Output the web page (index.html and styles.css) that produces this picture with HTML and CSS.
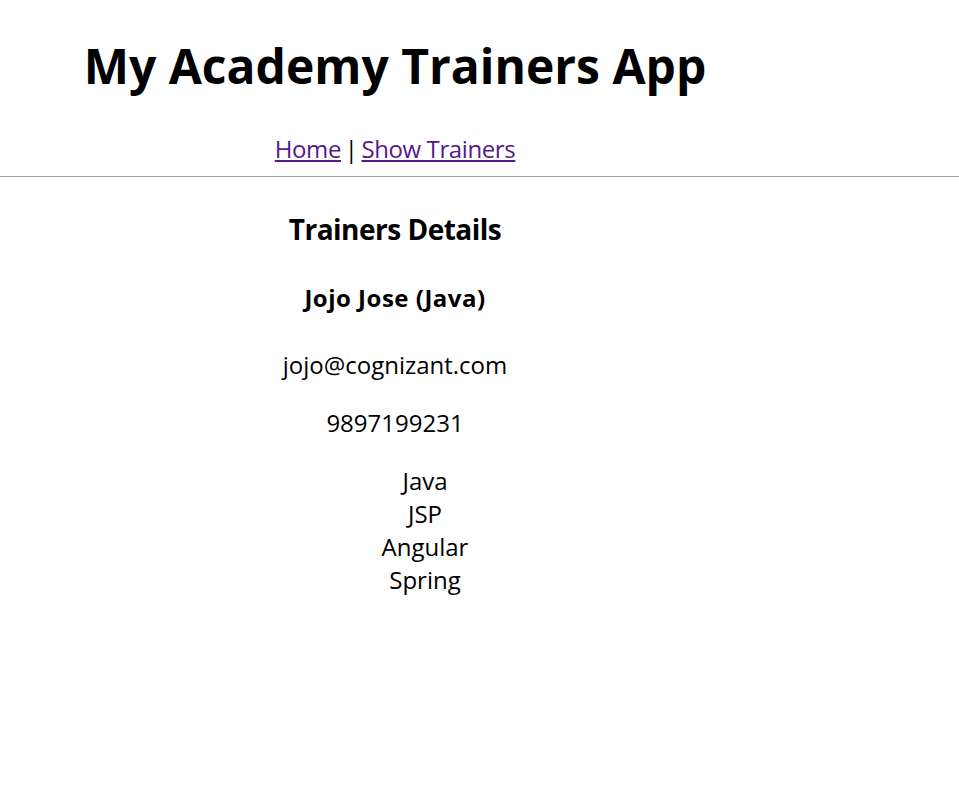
FILE: index.html
```html
<!DOCTYPE html>
<html lang="en">
<head>
<meta charset="utf-8">
<title>My Academy Trainers App</title>
<link rel="stylesheet" href="styles.css">
</head>
<body>
<header class="site-header">
  <div class="column">
    <h1 class="app-title">My Academy Trainers App</h1>
    <nav class="nav"><a href="#">Home</a> | <a href="#">Show Trainers</a></nav>
  </div>
</header>
<main class="column details">
  <h3 class="details-title">Trainers Details</h3>
  <h4 class="trainer-name">Jojo Jose (Java)</h4>
  <p class="info email">jojo@cognizant.com</p>
  <p class="info phone">9897199231</p>
  <ul class="skills">
    <li>Java</li>
    <li>JSP</li>
    <li>Angular</li>
    <li>Spring</li>
  </ul>
</main>
</body>
</html>
```
FILE: styles.css
```css
html, body {
  margin: 0;
  padding: 0;
  background: #fff;
}
body {
  font-family: "Open Sans", "Noto Sans", sans-serif;
  color: #000;
  font-size: 24px;
}
.column {
  width: 766px;
  margin-left: 12px;
  text-align: center;
}
.site-header {
  border-bottom: 1px solid #a0a0a0;
  padding-bottom: 11px;
}
.app-title {
  margin: 34px 0 0;
  font-size: 48px;
  line-height: 64px;
  font-weight: 700;
}
.nav {
  margin-top: 35px;
  line-height: 32px;
  letter-spacing: -0.4px;
  word-spacing: -2px;
}
.nav a {
  color: #551a8b;
  word-spacing: 0;
}
.details-title {
  margin: 34px 0 0;
  font-size: 28px;
  line-height: 36px;
  font-weight: 700;
  letter-spacing: -0.5px;
}
.trainer-name {
  margin: 35px 0 0;
  font-size: 24px;
  line-height: 32px;
  font-weight: 700;
  letter-spacing: 0.5px;
}
.info {
  margin: 0;
  line-height: 32px;
}
.email { margin-top: 35px; }
.phone { margin-top: 26px; }
.skills {
  list-style: none;
  margin: 25px 0 0;
  padding-left: 60px;
}
.skills li {
  line-height: 33px;
}
```
